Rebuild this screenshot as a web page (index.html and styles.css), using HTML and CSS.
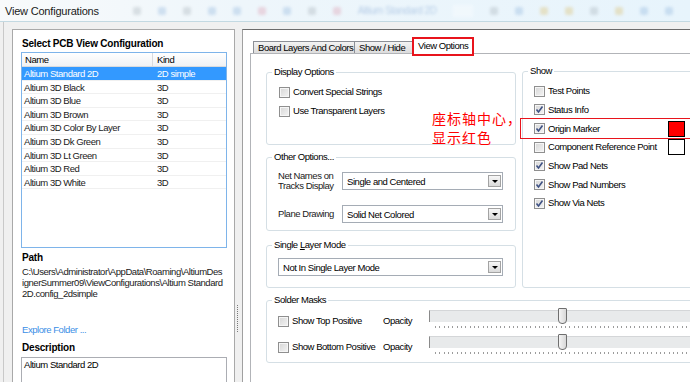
FILE: index.html
```html
<!DOCTYPE html>
<html lang="en">
<head>
    <meta charset="UTF-8">
    <meta name="viewport" content="width=device-width, initial-scale=1.0">
    <title>View Configurations</title>
    <link rel="stylesheet" href="styles.css">
</head>
<body>
    <div class="titlebar">
        <span class="title">View Configurations</span>
        <div class="ghost">
            <span class="g-icon g-grey"></span>
            <span class="g-icon g-blue"></span>
            <span class="g-icon g-grey"></span>
            <span class="g-icon g-blue"></span>
            <span class="g-icon g-blue"></span>
            <span class="g-icon g-pink"></span>
            <span class="g-icon g-blue"></span>
            <span class="g-icon g-grey"></span>
            <span class="g-icon g-pink"></span>
            <span class="g-text">Altium Standard 2D</span>
            <span class="g-box"></span>
            <span class="g-icon g-grey"></span>
            <span class="g-icon g-blue"></span>
            <span class="g-icon g-yellow"></span>
            <span class="g-icon g-yellow"></span>
            <span class="g-icon g-grey"></span>
            <span class="g-icon g-yellow"></span>
            <span class="g-icon g-blue"></span>
            <span class="g-icon g-blue"></span>
        </div>
    </div>

    <div class="window">
        <div class="left-panel">
            <h2 class="section-label">Select PCB View Configuration</h2>
            <div class="listbox">
                <div class="list-head">
                    <span class="col-name">Name</span>
                    <span class="col-kind">Kind</span>
                </div>
                <div class="list-row selected"><span class="col-name">Altium Standard 2D</span><span class="col-kind">2D simple</span></div>
                <div class="list-row"><span class="col-name">Altium 3D Black</span><span class="col-kind">3D</span></div>
                <div class="list-row"><span class="col-name">Altium 3D Blue</span><span class="col-kind">3D</span></div>
                <div class="list-row"><span class="col-name">Altium 3D Brown</span><span class="col-kind">3D</span></div>
                <div class="list-row"><span class="col-name">Altium 3D Color By Layer</span><span class="col-kind">3D</span></div>
                <div class="list-row"><span class="col-name">Altium 3D Dk Green</span><span class="col-kind">3D</span></div>
                <div class="list-row"><span class="col-name">Altium 3D Lt Green</span><span class="col-kind">3D</span></div>
                <div class="list-row"><span class="col-name">Altium 3D Red</span><span class="col-kind">3D</span></div>
                <div class="list-row"><span class="col-name">Altium 3D White</span><span class="col-kind">3D</span></div>
            </div>

            <h2 class="section-label path-label">Path</h2>
            <p class="path-text">C:\Users\Administrator\AppData\Roaming\AltiumDes<br>ignerSummer09\ViewConfigurations\Altium Standard<br>2D.config_2dsimple</p>

            <a class="explore" href="#">Explore Folder ...</a>

            <h2 class="section-label desc-label">Description</h2>
            <div class="desc-box">Altium Standard 2D</div>
        </div>

        <div class="splitter"><div class="grip"></div></div>

        <div class="right-panel">
            <div class="tabs">
                <div class="tab tab-layers">Board Layers And Colors</div>
                <div class="tab tab-show">Show / Hide</div>
                <div class="tab tab-view active">View Options</div>
            </div>

            <div class="tab-page">
                <div class="page-grid">
                    <div class="col-left">
                        <fieldset class="group display-group">
                            <legend>Display Options</legend>
                            <div class="group-body">
                                <div class="check-row"><span class="box"></span><span class="text">Convert Special Strings</span></div>
                                <div class="check-row"><span class="box"></span><span class="text">Use Transparent Layers</span></div>
                            </div>
                        </fieldset>

                        <fieldset class="group other-group">
                            <legend>Other Options...</legend>
                            <div class="group-body">
                                <div class="field-row">
                                    <span class="field-label">Net Names on<br>Tracks Display</span>
                                    <div class="dropdown"><span>Single and Centered</span><span class="dd-btn"><i class="arrow"></i></span></div>
                                </div>
                                <div class="field-row">
                                    <span class="field-label">Plane Drawing</span>
                                    <div class="dropdown"><span>Solid Net Colored</span><span class="dd-btn"><i class="arrow"></i></span></div>
                                </div>
                            </div>
                        </fieldset>

                        <fieldset class="group single-group">
                            <legend>Single <u>L</u>ayer Mode</legend>
                            <div class="group-body">
                                <div class="dropdown wide"><span>Not In Single Layer Mode</span><span class="dd-btn"><i class="arrow"></i></span></div>
                            </div>
                        </fieldset>
                    </div>

                    <fieldset class="group show-group">
                        <legend>Show</legend>
                        <div class="group-body">
                            <div class="check-row show-row"><span class="box"></span><span class="text">Test Points</span></div>
                            <div class="check-row show-row"><span class="box checked"><svg viewBox="0 0 9 9"><path d="M1.5 4.5 L3.5 7 L7.5 1.5"/></svg></span><span class="text">Status Info</span></div>
                            <div class="check-row show-row marked"><span class="box checked"><svg viewBox="0 0 9 9"><path d="M1.5 4.5 L3.5 7 L7.5 1.5"/></svg></span><span class="text swatch-label">Origin Marker</span><span class="swatch red"></span></div>
                            <div class="check-row show-row"><span class="box"></span><span class="text swatch-label">Component Reference Point</span><span class="swatch"></span></div>
                            <div class="check-row show-row"><span class="box checked"><svg viewBox="0 0 9 9"><path d="M1.5 4.5 L3.5 7 L7.5 1.5"/></svg></span><span class="text">Show Pad Nets</span></div>
                            <div class="check-row show-row"><span class="box checked"><svg viewBox="0 0 9 9"><path d="M1.5 4.5 L3.5 7 L7.5 1.5"/></svg></span><span class="text">Show Pad Numbers</span></div>
                            <div class="check-row show-row"><span class="box checked"><svg viewBox="0 0 9 9"><path d="M1.5 4.5 L3.5 7 L7.5 1.5"/></svg></span><span class="text">Show Via Nets</span></div>
                        </div>
                    </fieldset>
                </div>

                <fieldset class="group solder-group">
                    <legend>Solder Masks</legend>
                    <div class="group-body">
                        <div class="mask-row">
                            <div class="check-row mask-check"><span class="box"></span><span class="text">Show Top Positive</span></div>
                            <span class="opacity">Opacity</span>
                            <div class="slider">
                                <div class="track"><span class="thumb"></span></div>
                                <div class="ticks"></div>
                            </div>
                        </div>
                        <div class="mask-row">
                            <div class="check-row mask-check"><span class="box"></span><span class="text">Show Bottom Positive</span></div>
                            <span class="opacity">Opacity</span>
                            <div class="slider">
                                <div class="track"><span class="thumb"></span></div>
                                <div class="ticks"></div>
                            </div>
                        </div>
                    </div>
                </fieldset>

                <div class="note">座标轴中心，<br>显示红色</div>
            </div>
        </div>
    </div>
</body>
</html>
```

FILE: styles.css
```css
* {
    box-sizing: border-box;
}
body {
    margin: 0;
    width: 690px;
    height: 382px;
    overflow: hidden;
    background-color: #f0f0f0;
    font-family: "Liberation Sans", Arial, sans-serif;
    font-size: 9.5px;
    letter-spacing: -0.45px;
    color: #000;
}

/* title bar with the blurred toolbar behind it */
.titlebar {
    height: 22px;
    display: flex;
    align-items: center;
    padding-left: 5px;
    background: linear-gradient(90deg, #f8fafb, #eef6fb 35%, #e7f4fc);
    border-bottom: 1px solid #c3d9e2;
    overflow: hidden;
}
.title {
    flex-shrink: 0;
    white-space: nowrap;
    font-size: 11px;
    letter-spacing: -0.2px;
    color: #1a1a1a;
}
.ghost {
    display: flex;
    flex-shrink: 0;
    align-items: center;
    gap: 17px;
    margin-left: 34px;
    filter: blur(1.4px);
    opacity: 0.3;
    white-space: nowrap;
}
.g-icon {
    width: 8px;
    height: 8px;
    border-radius: 2px;
}
.g-grey { background-color: #9aa4ac; }
.g-blue { background-color: #7fa9d6; }
.g-pink { background-color: #d98aa0; }
.g-yellow { background-color: #d8b450; }
.g-text {
    font-size: 10px;
    color: #3b6fb8;
}
.g-box {
    width: 20px;
    height: 12px;
    background-color: #fff;
}

.window {
    display: flex;
    height: 360px;
    margin-left: 3px;
    border-left: 1px solid #c9c9c9;
    padding: 7px 0 0 8px;
}

/* left side */
.left-panel {
    width: 223px;
    background-color: #fff;
    border: 1px solid #a9a9a9;
    border-bottom: none;
    padding: 7px 8px 0 9px;
}
.section-label {
    margin: 0;
    font-size: 10px;
    font-weight: bold;
    letter-spacing: -0.2px;
    line-height: 13px;
}
.listbox {
    width: 206px;
    height: 196px;
    margin: 2px 0 0 -1px;
    border: 1px solid #7eb4ea;
    background-color: #fff;
}
.list-head {
    display: flex;
    height: 14px;
    line-height: 13px;
    background: linear-gradient(#ffffff, #f1f2f4);
    border-bottom: 1px solid #d9dbde;
}
.list-head .col-name {
    width: 131px;
    padding-left: 3px;
    border-right: 1px solid #d9dbde;
}
.list-head .col-kind {
    padding-left: 4px;
}
.list-row {
    display: flex;
    height: 13.6px;
    line-height: 13px;
    border-bottom: 1px solid #f0f0f0;
    color: #1a1a1a;
}
.list-row .col-name {
    width: 131px;
    padding-left: 2px;
}
.list-row .col-kind {
    padding-left: 4px;
}
.list-row.selected {
    background-color: #3399ff;
    color: #fff;
}
.path-label {
    margin-top: 3px;
}
.path-text {
    margin: 2px 0 0;
    line-height: 11px;
    white-space: nowrap;
    color: #1a1a1a;
}
.explore {
    display: block;
    margin-top: 24px;
    line-height: 13px;
    color: #3a8ee6;
    text-decoration: none;
}
.desc-label {
    margin-top: 5px;
}
.desc-box {
    width: 206px;
    height: 40px;
    margin: 3px 0 0 -1px;
    border: 1px solid #abadb3;
    padding: 1px 2px;
    line-height: 12px;
}

.splitter {
    width: 7px;
}
.grip {
    width: 1px;
    height: 28px;
    margin: 276px 0 0 2px;
    background: repeating-linear-gradient(#7a7a7a 0 1px, transparent 1px 2px);
}

/* right side */
.right-panel {
    flex: 1;
    min-width: 0;
    background-color: #fff;
    border-top: 1px solid #6b6b6b;
    border-left: 1px solid #a0a0a0;
    padding-left: 7px;
    overflow: hidden;
}
.tabs {
    display: flex;
    align-items: flex-end;
    height: 23px;
    padding-left: 3px;
}
.tab {
    height: 12px;
    line-height: 11px;
    padding-left: 4px;
    white-space: nowrap;
    border: 1px solid #8c8f96;
    border-bottom: none;
    background: linear-gradient(#f3f3f3, #dcdcdc);
}
.tab-layers { width: 102px; }
.tab-show { width: 58px; border-left: none; }
.tab-view { width: 60px; }
.tab.active {
    position: relative;
    z-index: 1;
    height: 17px;
    margin-bottom: -2px;
    line-height: 15px;
    padding-left: 5px;
    background: #fff;
    border: none;
    outline: 2px solid #e8141c;
    outline-offset: -1px;
}

.tab-page {
    position: relative;
    width: 460px;
    height: 340px;
    border-top: 1px solid #b2b4b8;
    border-left: 1px solid #b2b4b8;
    padding: 11px 0 0 15px;
}
.page-grid {
    display: grid;
    grid-template-columns: 250px 200px;
    column-gap: 6px;
}
.col-left {
    display: flex;
    flex-direction: column;
}

.group {
    margin: 0;
    padding: 0;
    min-width: 0;
    border: 1px solid #d5dfe5;
    border-radius: 3px;
}
.group legend {
    margin-left: 5px;
    padding: 0 2px;
    line-height: 12px;
}
.display-group {
    margin-top: 1px;
}
.display-group .group-body {
    display: flex;
    flex-direction: column;
    gap: 5px;
    padding: 7px 0 26px 12px;
}
.other-group {
    margin-top: 6px;
}
.other-group .group-body {
    display: flex;
    flex-direction: column;
    gap: 14px;
    padding: 8px 0 7px 11px;
}
.single-group {
    margin-top: 8px;
}
.single-group .group-body {
    padding: 7px 0 11px 11px;
}

.check-row {
    display: flex;
    align-items: center;
    gap: 3px;
    height: 14px;
    white-space: nowrap;
}
.box {
    flex-shrink: 0;
    width: 11px;
    height: 11px;
    border: 1px solid #8f8f8f;
    background: linear-gradient(135deg, #d6d6d6, #f4f4f4);
    box-shadow: inset 0 0 0 1px #f6f6f6;
}
.box svg {
    display: block;
    width: 9px;
    height: 9px;
    fill: none;
    stroke: #3f5284;
    stroke-width: 1.6;
}
.text {
    line-height: 12px;
}

.field-row {
    display: flex;
    align-items: center;
}
.field-label {
    width: 64px;
    line-height: 10px;
    color: #1a1a1a;
}
.dropdown {
    display: flex;
    align-items: center;
    justify-content: space-between;
    width: 161px;
    height: 18px;
    padding-left: 4px;
    border: 1px solid #a5acb5;
    background-color: #fff;
}
.dropdown.wide {
    width: 225px;
}
.dd-btn {
    display: flex;
    align-items: center;
    justify-content: center;
    width: 13px;
    height: 12px;
    margin-right: 1px;
    border: 1px solid #a3a3a3;
    background: linear-gradient(#f7f7f7, #dadada);
}
.arrow {
    width: 0;
    height: 0;
    border-left: 3px solid transparent;
    border-right: 3px solid transparent;
    border-top: 3px solid #000;
}

.show-group .group-body {
    padding: 5px 0 0 11px;
}
.show-row {
    height: 18.67px;
}
.show-row.marked {
    margin-left: -13px;
    padding-left: 13px;
    outline: 1px solid #e8141c;
}
.swatch-label {
    width: 117px;
}
.swatch {
    flex-shrink: 0;
    width: 17px;
    height: 16px;
    border: 1px solid #000;
    background-color: #fff;
}
.swatch.red {
    background-color: #ff0000;
}

.solder-group {
    width: 440px;
    margin-top: 6px;
}
.solder-group .group-body {
    padding: 2px 0 2px 11px;
}
.mask-row {
    display: flex;
    align-items: flex-start;
    height: 26px;
}
.mask-check {
    width: 105px;
    margin-top: 6px;
}
.opacity {
    width: 46px;
    margin-top: 7px;
    line-height: 12px;
}
.slider {
    width: 270px;
    padding-top: 2px;
}
.track {
    display: flex;
    height: 12px;
    background-color: #e8eaeb;
    border-left: 1px solid #8a8a8a;
    border-top: 1px solid #d4d6d8;
}
.thumb {
    width: 9px;
    height: 16px;
    margin: -3px 0 0 128px;
    border: 1px solid #6f6f6f;
    border-radius: 1px 1px 4px 4px;
    background: linear-gradient(90deg, #f4f4f4, #d8d8d8);
}
.ticks {
    height: 2px;
    margin: 4px 0 0 6px;
    background: repeating-linear-gradient(90deg, #9c9c9c 0 1px, transparent 1px 4.33px);
}

/* red annotation written over the screenshot */
.note {
    position: absolute;
    left: 181px;
    top: 55px;
    font-family: "Noto Sans CJK SC", sans-serif;
    font-size: 14px;
    line-height: 19px;
    letter-spacing: 1px;
    color: #ff0000;
}
```
